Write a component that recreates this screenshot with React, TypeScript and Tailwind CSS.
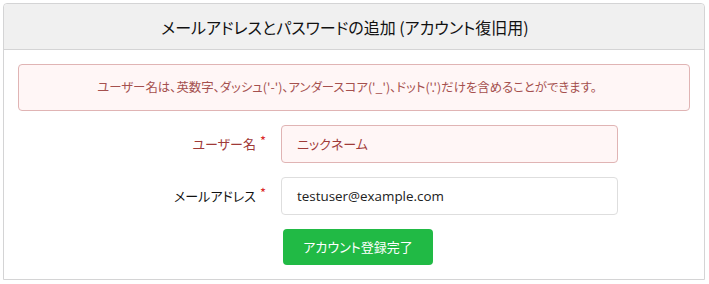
import React from "react";

const font = "font-['Noto_Sans_CJK_JP','Noto_Sans',sans-serif]";

export default function App() {
  return (
    <div className={`w-[709px] h-[284px] bg-white pt-[3px] px-[3px] ${font} [font-feature-settings:'palt']`}>
      <div className="w-[702px] h-[277px] border border-[#d4d4d5] rounded-t-[4px] flex flex-col">
        <div className="h-[46px] bg-[#f0f0f0] border-b border-[#d4d4d5] flex items-center justify-center pr-[18px] text-[16px] font-normal text-[#111] rounded-t-[4px]">
          メールアドレスとパスワードの追加 (アカウント復旧用)
        </div>
        <div className="px-[14px] pt-[14px] flex flex-col">
          <div className="h-[47px] bg-[#fff6f6] border border-[#e0b4b4] rounded-[4px] flex items-center justify-center pr-[14px] text-[12.4px] text-[#a5504e]">
            ユーザー名は、英数字、ダッシュ('-')、アンダースコア('_')、ドット('.')だけを含めることができます。
          </div>
          <div className="flex items-center mt-[14px]">
            <div className="w-[250px] text-right pr-[2px] text-[13px] font-normal text-[#9f3a38]">
              ユーザー名<span className="text-[#db2828] ml-[4px] relative -top-[3px]">*</span>
            </div>
            <div className="ml-[13px] w-[337px] h-[38px] bg-[#fff6f6] border border-[#e0b4b4] rounded-[4px] flex items-center px-[15px] text-[13px] text-[#9f3a38]">
              ニックネーム
            </div>
          </div>
          <div className="flex items-center mt-[14px]">
            <div className="w-[250px] text-right pr-[2px] text-[13px] font-normal text-[#111]">
              メールアドレス<span className="text-[#db2828] ml-[4px] relative -top-[3px]">*</span>
            </div>
            <div className="ml-[13px] w-[337px] h-[38px] bg-white border border-[#dedede] rounded-[4px] flex items-center px-[15px] text-[13.4px] text-[#212121] font-['Open_Sans',sans-serif]">
              testuser@example.com
            </div>
          </div>
          <div className="flex mt-[14px]">
            <div className="ml-[265px] w-[150px] h-[36px] bg-[#21ba45] rounded-[4px] flex items-center justify-center text-[13px] text-white font-normal">
              アカウント登録完了
            </div>
          </div>
        </div>
      </div>
    </div>
  );
}
